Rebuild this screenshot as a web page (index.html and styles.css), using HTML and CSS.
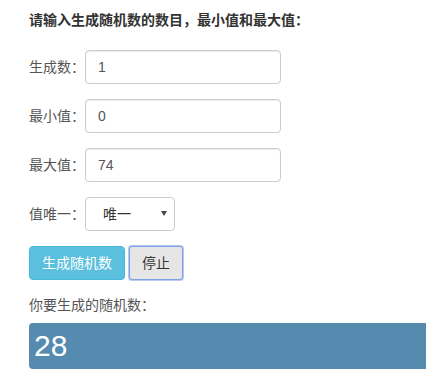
FILE: index.html
```html
<!DOCTYPE html>
<html lang="zh-CN">
<head>
    <meta charset="UTF-8" />
    <meta name="viewport" content="width=device-width, initial-scale=1.0" />
    <title>随机数生成</title>
    <link rel="stylesheet" href="styles.css">
</head>
<body>

<div class="container">
    <p class="title">请输入生成随机数的数目，最小值和最大值：</p>
    <form id="random-form">
        <div class="row">
            <label for="count">生成数：</label>
            <input type="text" id="count" name="count" value="1"/>
        </div>
        <div class="row">
            <label for="min">最小值：</label>
            <input type="text" id="min" name="min" value="0"/>
        </div>
        <div class="row">
            <label for="max">最大值：</label>
            <input type="text" id="max" name="max" value="74"/>
        </div>
        <div class="row">
            <label for="unique">值唯一：</label>
            <div class="select-wrap">
                <select id="unique" name="unique">
                    <option value="1">唯一</option>
                    <option value="0">不唯一</option>
                </select>
            </div>
        </div>
        <div class="buttons">
            <button type="button" class="btn btn-info">生成随机数</button>
            <button type="button" class="btn btn-stop">停止</button>
        </div>
    </form>
    <p class="result-label">你要生成的随机数：</p>
    <div class="result">28</div>
</div>

</body>
</html>
```

FILE: styles.css
```css
body {
    margin: 0;
    font-family: 'Liberation Sans', 'Noto Sans CJK SC', sans-serif;
    font-size: 14px;
    line-height: 20px;
    color: #333;
    background: #fff;
    overflow: hidden;
}

.container {
    padding: 0 0 0 29px;
}

.title {
    font-weight: bold;
    margin: 10px 0 20px;
}

.row {
    display: flex;
    align-items: center;
    margin-bottom: 15px;
}

label {
    width: 56px;
    color: #555;
}

input[type="text"] {
    box-sizing: border-box;
    width: 196px;
    height: 34px;
    padding: 6px 12px;
    border: 1px solid #ccc;
    border-radius: 4px;
    font: inherit;
    color: #555;
    box-shadow: inset 0 1px 1px rgba(0,0,0,0.075);
}

.select-wrap {
    position: relative;
}

.select-wrap::after {
    content: "";
    position: absolute;
    top: 14px;
    right: 8px;
    border-left: 3px solid transparent;
    border-right: 3px solid transparent;
    border-top: 5px solid #444;
    pointer-events: none;
}

select {
    box-sizing: border-box;
    width: 90px;
    height: 34px;
    padding: 6px 12px 6px 17px;
    border: 1px solid #ccc;
    border-radius: 4px;
    background: #fff;
    font: inherit;
    color: #333;
    -webkit-appearance: none;
    appearance: none;
}

.buttons {
    display: flex;
    gap: 4px;
}

.btn {
    box-sizing: border-box;
    height: 34px;
    padding: 6px 12px;
    border: 1px solid transparent;
    border-radius: 4px;
    font: inherit;
    cursor: pointer;
}

.btn-info {
    color: #fff;
    background-color: #5bc0de;
    border-color: #46b8da;
}

.btn-stop {
    color: #333;
    background-color: #e6e6e6;
    border-color: #7d9fe3;
    border-radius: 3px;
    box-shadow: 0 0 0 1px #b7caf0;
}

.result-label {
    margin: 15px 0 8px;
    color: #555;
}

.result {
    height: 46px;
    background-color: #568bb0;
    border-radius: 4px 0 0 4px;
    color: #fff;
    font-size: 30px;
    line-height: 46px;
    padding-left: 5px;
}
```
